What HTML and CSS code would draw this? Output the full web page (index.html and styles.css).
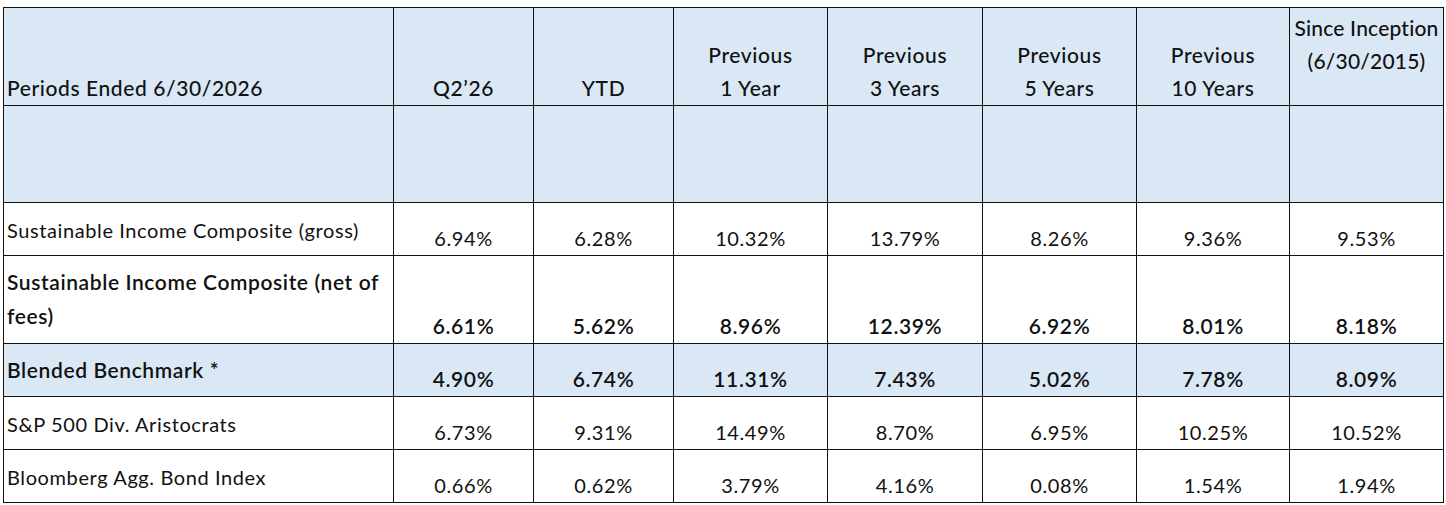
FILE: index.html
```html
<!DOCTYPE html>
<html>
<head>
<meta charset="utf-8">
<link rel="stylesheet" href="styles.css">
</head>
<body>
<table class="perf">
  <colgroup>
    <col class="c-label">
    <col class="c-q">
    <col class="c-ytd">
    <col class="c-p1">
    <col class="c-p3">
    <col class="c-p5">
    <col class="c-p10">
    <col class="c-si">
  </colgroup>
  <thead>
    <tr class="r-head">
      <th class="lbl">Periods Ended 6/30/2026</th>
      <th>Q2’26</th>
      <th>YTD</th>
      <th>Previous<br>1 Year</th>
      <th>Previous<br>3 Years</th>
      <th>Previous<br>5 Years</th>
      <th>Previous<br>10 Years</th>
      <th class="since">Since Inception<br>(6/30/2015)</th>
    </tr>
    <tr class="r-blank">
      <th></th><th></th><th></th><th></th><th></th><th></th><th></th><th></th>
    </tr>
  </thead>
  <tbody>
    <tr class="r-one">
      <td class="lbl">Sustainable Income Composite (gross)</td>
      <td>6.94%</td><td>6.28%</td><td>10.32%</td><td>13.79%</td><td>8.26%</td><td>9.36%</td><td>9.53%</td>
    </tr>
    <tr class="r-two strong">
      <td class="lbl">Sustainable Income Composite (net of fees)</td>
      <td>6.61%</td><td>5.62%</td><td>8.96%</td><td>12.39%</td><td>6.92%</td><td>8.01%</td><td>8.18%</td>
    </tr>
    <tr class="r-one strong shaded">
      <td class="lbl">Blended Benchmark *</td>
      <td>4.90%</td><td>6.74%</td><td>11.31%</td><td>7.43%</td><td>5.02%</td><td>7.78%</td><td>8.09%</td>
    </tr>
    <tr class="r-one">
      <td class="lbl">S&amp;P 500 Div. Aristocrats</td>
      <td>6.73%</td><td>9.31%</td><td>14.49%</td><td>8.70%</td><td>6.95%</td><td>10.25%</td><td>10.52%</td>
    </tr>
    <tr class="r-one">
      <td class="lbl">Bloomberg Agg. Bond Index</td>
      <td>0.66%</td><td>0.62%</td><td>3.79%</td><td>4.16%</td><td>0.08%</td><td>1.54%</td><td>1.94%</td>
    </tr>
  </tbody>
</table>
</body>
</html>
```
FILE: styles.css
```css
html, body {
  margin: 0;
  padding: 0;
  background: #ffffff;
}

body {
  font-family: Lato, "Noto Sans", sans-serif;
  color: #111111;
  font-size: 20px;
  letter-spacing: 0.6px;
}

.perf {
  border-collapse: collapse;
  table-layout: fixed;
  margin: 7px 0 0 3px;
  width: 1441px;
}

.c-label { width: 390px; }
.c-q { width: 140px; }
.c-ytd { width: 140px; }
.c-p1 { width: 154px; }
.c-p3 { width: 155px; }
.c-p5 { width: 154px; }
.c-p10 { width: 153px; }
.c-si { width: 154px; }

.perf th,
.perf td {
  border: 1.5px solid #111111;
  padding: 0;
  text-align: center;
}

.perf thead th {
  background: #dae8f6;
  font-size: 21px;
  font-weight: 500;
  vertical-align: bottom;
  line-height: 33px;
  padding-bottom: 1px;
}

.perf th.lbl,
.perf td.lbl {
  text-align: left;
  padding-left: 3px;
}

.perf th.since {
  white-space: nowrap;
  letter-spacing: 0.2px;
  padding-bottom: 28px;
}

.r-head { height: 98px; }
.r-blank { height: 97px; }
.r-one { height: 53px; }
.r-two { height: 88px; }

.perf td {
  vertical-align: bottom;
  line-height: 24px;
  padding-bottom: 5px;
  font-weight: 400;
}

.perf td.lbl {
  vertical-align: top;
  line-height: 34px;
  padding-top: 10px;
  padding-bottom: 0;
  padding-right: 4px;
}

.perf .strong td {
  font-size: 21px;
  font-weight: 600;
}

.perf .strong td.lbl {
  padding-top: 9px;
}

.shaded td {
  background: #dae8f6;
}
```
